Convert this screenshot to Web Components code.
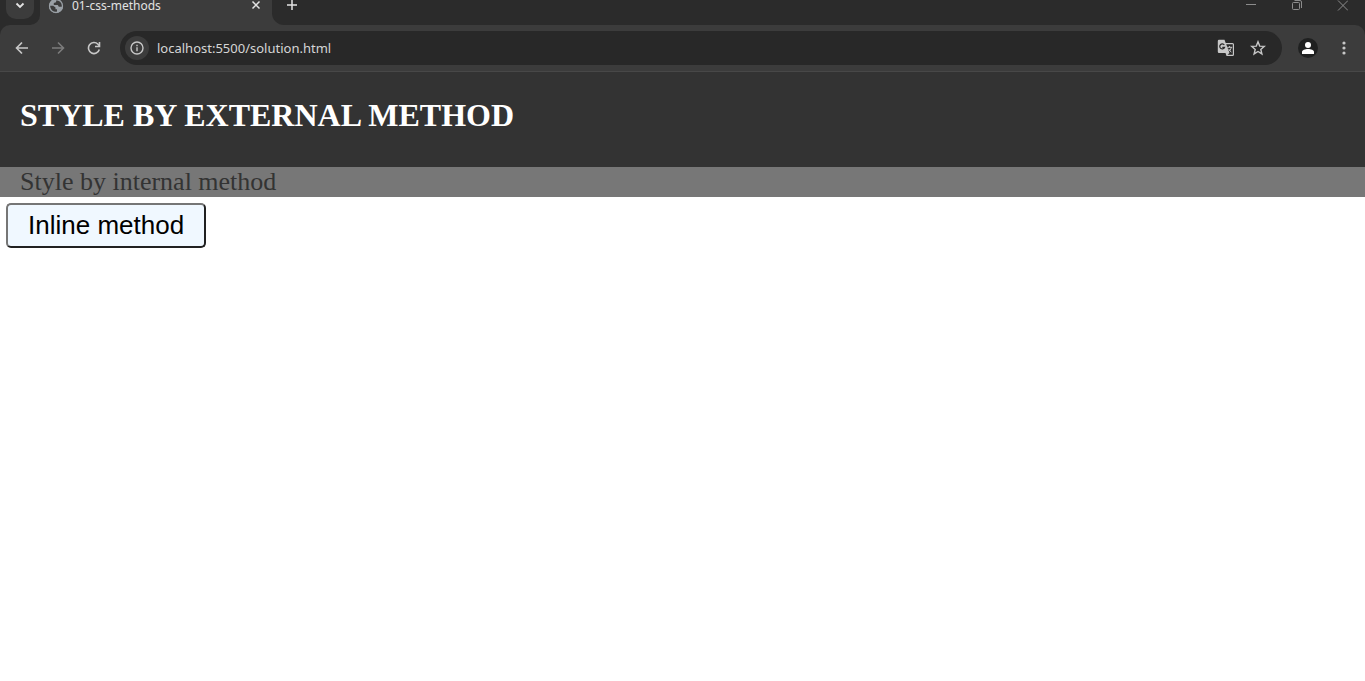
<!DOCTYPE html>
<html lang="en">
<head>
<meta charset="utf-8">
<title>01-css-methods</title>
<style>
html, body { margin: 0; background: #fff; }
</style>
</head>
<body>
<browser-frame>
  <tab-strip slot="chrome">01-css-methods</tab-strip>
  <tool-bar slot="chrome" url="localhost:5500/solution.html"></tool-bar>
  <external-heading>STYLE BY EXTERNAL METHOD</external-heading>
  <internal-text>Style by internal method</internal-text>
  <inline-button>Inline method</inline-button>
</browser-frame>
<script>
const define = (name, html, setup) => customElements.define(name, class extends HTMLElement {
  constructor() {
    super();
    this.attachShadow({ mode: "open" }).innerHTML = html;
  }
  connectedCallback() { if (setup) setup(this); }
});

define("browser-frame", `
<style>
:host { display: block; }
header { display: flex; flex-direction: column; }
main { display: block; }
</style>
<header><slot name="chrome"></slot></header>
<main><slot></slot></main>`);

define("tab-strip", `
<style>
:host { display: block; height: 25px; background: #3c3c3c; color: #e3e3e3; font: 12px/12px "Noto Sans", "Open Sans", sans-serif; }
.row { display: flex; height: 25px; align-items: stretch; }
button { display: flex; align-items: center; justify-content: center; border: 0; padding: 0; margin: 0; background: none; color: inherit; }
svg { display: block; fill: none; stroke: currentColor; }
.left { width: 40px; box-sizing: border-box; padding: 0 6px 6px; background: #2b2b2b; border-radius: 0 0 10px 0; display: flex; }
.search { width: 28px; height: 19px; background: #3c3c3c; border-radius: 0 0 10px 10px; align-items: flex-start; padding-top: 1px; }
.tab { width: 232px; box-sizing: border-box; padding: 0 8px; display: flex; align-items: flex-start; gap: 8px; }
.tab svg { flex: none; }
.title { flex: 1; white-space: nowrap; }
.close { width: 16px; height: 10px; }
.rest { flex: 1; background: #2b2b2b; border-radius: 0 0 0 12px; display: flex; justify-content: space-between; align-items: flex-start; }
.new { width: 40px; height: 10px; }
.window { display: flex; color: #8c8c8c; }
.window button { width: 46px; height: 11px; }
</style>
<div class="row">
  <div class="left"><button class="search" aria-label="Search tabs"><svg width="10" height="9" viewBox="0 0 10 9" stroke-width="1.800"><path d="M1.500 2.500 5 6l3.500-3.500"/></svg></button></div>
  <div class="tab">
    <svg width="16" height="14" viewBox="0 2 16 14" aria-hidden="true"><circle cx="8" cy="8" r="7" fill="#9aa0a6" stroke="none"/><path d="M8.500 1.500 8 4.200 5.800 5v2h4l1 1.800h3.700A6.500 6.500 0 0 0 10 1.800Z" fill="#3c3c3c" stroke="none"/><path d="M1.700 7.800h3.500l2.300 1.700v1.800H9v3H7A6.500 6.500 0 0 1 1.700 7.800Z" fill="#3c3c3c" stroke="none"/><circle cx="8" cy="8" r="6.500" stroke="#9aa0a6" stroke-width="1.300"/></svg>
    <span class="title"><slot></slot></span>
    <button class="close" aria-label="Close tab"><svg width="10" height="10" viewBox="0 0 10 10" stroke-width="1.500"><path d="m1.500 1.500 7 7m0-7-7 7"/></svg></button>
  </div>
  <div class="rest">
    <button class="new" aria-label="New tab"><svg width="12" height="12" viewBox="0 0 12 12" stroke-width="1.500"><path d="M6 1v10M1 6h10"/></svg></button>
    <div class="window">
      <button aria-label="Minimize"><svg width="12" height="11" viewBox="-2 0 12 11"><path d="M0 4.500h10"/></svg></button>
      <button aria-label="Restore"><svg width="12" height="11" viewBox="-2 0 12 11"><rect x=".5" y="2.500" width="7" height="7" rx="1"/><path d="M2.500.5H8a1.500 1.500 0 0 1 1.500 1.500v6"/></svg></button>
      <button aria-label="Close"><svg width="12" height="11" viewBox="-2 0 12 11"><path d="m0 .500 10 10m0-10-10 10"/></svg></button>
    </div>
  </div>
</div>`);

define("tool-bar", `
<style>
:host { display: block; background: #2b2b2b; }
.bar { display: flex; align-items: center; height: 46px; padding: 0 3px 0 4px; background: #3c3c3c; border-bottom: 1px solid #484848; border-radius: 10px 10px 0 0; color: #c7c7c7; }
button { display: flex; align-items: center; justify-content: center; flex: none; width: 36px; height: 34px; border: 0; padding: 0; background: none; color: inherit; }
button:disabled { color: #7c7c7c; }
svg { display: block; fill: none; stroke: currentColor; }
.address { flex: 1; display: flex; align-items: center; height: 34px; margin: 0 8px; padding: 0 8px 0 5px; box-sizing: border-box; border-radius: 17px; background: #282828; }
.address button { width: 32px; }
.address .info { width: 24px; height: 24px; border-radius: 12px; background: #3c3c3c; }
input { flex: 1; min-width: 0; border: 0; outline: 0; margin: 0; padding: 0 8px; background: none; color: #d6d6d6; font: 13px/20px "Noto Sans", "Open Sans", sans-serif; }
.face { border-radius: 10px; width: 20px; height: 20px; background: #1f2020; color: #fff; margin: 0 8px; }
</style>
<div class="bar">
  <button aria-label="Back"><svg width="14" height="14" viewBox="0 0 14 14" stroke-width="1.600"><path d="M13 7H2m5-5.500L1.500 7 7 12.500"/></svg></button>
  <button aria-label="Forward" disabled><svg width="14" height="14" viewBox="0 0 14 14" stroke-width="1.600"><path d="M1 7h11M7 1.500 12.500 7 7 12.500"/></svg></button>
  <button aria-label="Reload"><svg width="14" height="14" viewBox="0 0 14 14" stroke-width="1.600"><path d="M12.300 8.500A5.500 5.500 0 1 1 11 3.300L12.500 5"/><path d="M12.500 1v4.500H8"/></svg></button>
  <div class="address">
    <button class="info" aria-label="View site information"><svg width="14" height="14" viewBox="0 0 14 14" stroke-width="1.400"><circle cx="7" cy="7" r="6"/><path d="M7 6.200V10.200M7 3.800v1.400"/></svg></button>
    <input type="text" aria-label="Address" spellcheck="false">
    <button aria-label="Translate this page"><svg width="18" height="18" viewBox="0 0 18 18"><path d="M2 .800h5.500L8.700 4H15.500a1.500 1.500 0 0 1 1.500 1.500v10a1.500 1.500 0 0 1-1.500 1.500H9.500L8.500 14H2a1.200 1.200 0 0 1-1.200-1.200V2A1.200 1.200 0 0 1 2 .8Z" fill="#c7c7c7" stroke="none"/><path d="M9.200 5.200h6.600v10.600h-5.300l2-1.800Z" fill="#282828" stroke="none"/><path d="M7.300 6A2.500 2.500 0 1 0 7.600 8.300H5.300" stroke="#282828" stroke-width="1.200"/><path d="M10.200 8.300h5M12.600 7v1.300M14.300 8.300c-.5 2.200-1.600 3.500-3 4.500m.2-3 2.800 3.500"/></svg></button>
    <button aria-label="Bookmark this page"><svg width="16" height="16" viewBox="0 0 16 16" stroke-width="1.400"><path d="m8 1.800 1.700 4.300 4.600.3-3.500 3 1.100 4.500L8 11.500l-3.900 2.400 1.100-4.500-3.500-3 4.600-.3Z"/></svg></button>
  </div>
  <button class="face" aria-label="Profile"><svg width="12" height="12" viewBox="0 0 12 12"><g fill="#fff" stroke="none"><circle cx="6" cy="3" r="3"/><path d="M0 12v-2c0-2 3-3 6-3s6 1 6 3v2Z"/></g></svg></button>
  <button aria-label="Browser menu"><svg width="4" height="14" viewBox="0 0 4 14"><g fill="#c7c7c7" stroke="none"><circle cx="2" cy="2" r="1.600"/><circle cx="2" cy="7" r="1.600"/><circle cx="2" cy="12" r="1.600"/></g></svg></button>
</div>`, el => { el.shadowRoot.querySelector("input").value = el.getAttribute("url"); });

define("external-heading", `
<style>
:host { display: block; background: #333; color: #fff; padding: 24px 20px 33px; }
h1 { margin: 0; font: bold 32px/38px "Liberation Serif", "Times New Roman", serif; }
</style>
<h1><slot></slot></h1>`);

define("internal-text", `
<style>
:host { display: block; background: #777; color: #333; padding: 0 20px; }
p { margin: 0; font: 26px/30px "Liberation Serif", "Times New Roman", serif; }
</style>
<p><slot></slot></p>`);

define("inline-button", `
<style>
:host { display: block; padding: 6px; }
button { display: block; margin: 0; padding: 5px 20px; background: aliceblue; color: #000; border: 2px solid; border-color: #767676 #212121 #212121 #767676; border-radius: 5px; font: 26px/31px "Liberation Sans", Arial, sans-serif; }
</style>
<button type="button"><slot></slot></button>`);
</script>
</body>
</html>
